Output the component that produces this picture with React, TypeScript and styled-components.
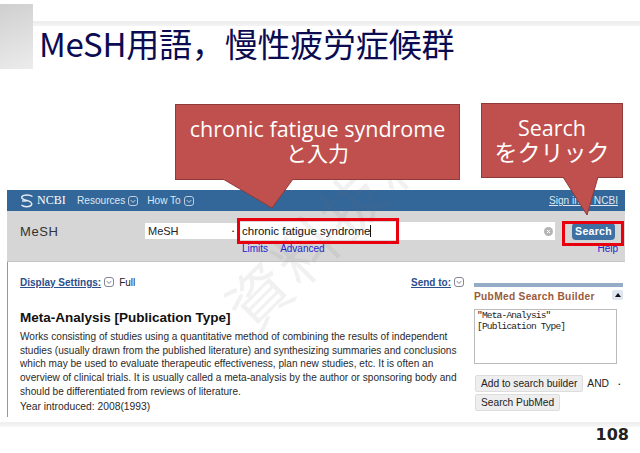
import React from 'react';
import styled, { createGlobalStyle } from 'styled-components';

const GlobalStyle = createGlobalStyle`
  html, body {
    margin: 0;
    padding: 0;
    background: #fff;
  }
`;

const sans = `"Liberation Sans", Arial, sans-serif`;
const slideFont = `"Open Sans", "Noto Sans CJK JP", sans-serif`;

const Slide = styled.div`
  position: relative;
  width: 640px;
  height: 453px;
  overflow: hidden;
  background: #fff;
  display: flex;
  flex-direction: column;
`;

const Header = styled.header`
  display: flex;
  height: 65px;
  margin-top: 4px;
  background: linear-gradient(#ececec, #f4f4f4) no-repeat 0 17px / 100% 5px;
`;

const Corner = styled.div`
  width: 33px;
  background: linear-gradient(160deg, #cfcfcf, #ececec);
`;

const Title = styled.h1`
  margin: 17px 0 0 6px;
  font: 400 33px/44px "Noto Sans CJK JP", sans-serif;
  color: #0b0b52;
  white-space: nowrap;
  letter-spacing: -0.2px;
`;

const Browser = styled.section`
  width: 618px;
  height: 227px;
  margin: 121px 0 0 7px;
  font-family: ${sans};
  display: flex;
  flex-direction: column;
`;

const TopBar = styled.div`
  height: 21px;
  flex: none;
  background: #336699;
  color: #dfe8f2;
  display: flex;
  align-items: center;
  padding: 0 7px 0 13px;
  font-size: 10.100px;
`;

const Brand = styled.span`
  display: flex;
  align-items: center;
  gap: 3px;
  width: 57px;
  font: 400 12px "Liberation Serif", serif;
  color: #fff;
`;

const NavItem = styled.span`
  display: flex;
  align-items: center;
  gap: 3px;
  margin-right: 9px;
`;

const SignIn = styled.a`
  margin-left: auto;
  text-decoration: underline;
  color: #dfe8f2;
`;

const SearchBar = styled.div`
  height: 51px;
  flex: none;
  background: #d6d6d6;
  border-bottom: 1px solid #c6c6c6;
  box-sizing: border-box;
  padding-top: 10px;
`;

const SearchRow = styled.div`
  display: flex;
  align-items: center;
  height: 20px;
`;

const DbName = styled.div`
  width: 125px;
  padding-left: 13px;
  box-sizing: border-box;
  font-size: 13px;
  letter-spacing: 0.6px;
  color: #333;
`;

const DbSelect = styled.div`
  width: 92px;
  height: 16px;
  margin-left: 13px;
  padding: 0 3px;
  box-sizing: border-box;
  background: #fff;
  font-size: 11px;
  line-height: 16px;
  color: #222;
  display: flex;
  justify-content: space-between;
`;

const Dot = styled.span`
  font-size: 6px;
`;

const TermInput = styled.div`
  width: 318px;
  height: 18px;
  padding-left: 5px;
  box-sizing: border-box;
  background: #fff;
  font-size: 11.500px;
  line-height: 18px;
  color: #111;
  display: flex;
  align-items: center;
`;

const Caret = styled.span`
  width: 1px;
  height: 12px;
  background: #111;
`;

const ClearIcon = styled.svg`
  width: 9px;
  height: 9px;
  margin-left: auto;
  margin-right: 2px;
`;

const SearchButton = styled.button`
  width: 43px;
  height: 17px;
  margin-left: 17px;
  padding: 0;
  border: 0;
  border-radius: 4px;
  background: #3f70a3;
  color: #fff;
  font: 700 10.500px ${sans};
  letter-spacing: 0.3px;
`;

const LinkRow = styled.div`
  display: flex;
  gap: 12px;
  margin-top: 1px;
  padding: 0 7px 0 235px;
  font-size: 10px;
  line-height: 13px;
  color: #2222cc;
`;

const HelpLink = styled.span`
  margin-left: auto;
`;

const Content = styled.div`
  flex: 1;
  display: flex;
  border-left: 1px solid #8b99b3;
  padding: 14px 0 0 12px;
  color: #222;
`;

const Article = styled.article`
  width: 444px;
  font-size: 10px;
`;

const MetaRow = styled.div`
  display: flex;
  align-items: center;
  gap: 3px;
  height: 12px;
  font-size: 10px;
`;

const MetaLink = styled.span`
  color: #2a4f8c;
  font-weight: 700;
  text-decoration: underline;
`;

const FullLabel = styled.span`
  margin-left: 2px;
`;

const SendTo = styled.span`
  margin-left: auto;
  display: flex;
  align-items: center;
  gap: 3px;
`;

const ArticleTitle = styled.h2`
  margin: 22px 0 5px;
  font: 700 13.500px/15px ${sans};
  color: #111;
`;

const Body = styled.p`
  margin: 0;
  font-size: 10.100px;
  line-height: 13.700px;
  color: #2a2a2a;
`;

const Year = styled.p`
  margin: 1px 0 0;
  font-size: 10.300px;
  line-height: 13px;
  color: #2a2a2a;
`;

const Sidebar = styled.aside`
  width: 149px;
  margin: 7px 0 0 10px;
`;

const SideHead = styled.div`
  border-top: 4px solid #95acc6;
  display: flex;
  justify-content: space-between;
  align-items: flex-start;
  height: 18px;
  margin-bottom: 4px;
`;

const SideTitle = styled.span`
  margin-top: 4px;
  font: 700 10.200px/12px ${sans};
  letter-spacing: 0.3px;
  color: #9a5a3a;
`;

const Collapse = styled.span`
  width: 11px;
  height: 10px;
  margin-top: 3px;
  border-radius: 2px;
  background: #dfe6ef;
  display: flex;
  align-items: center;
  justify-content: center;
`;

const UpArrow = styled.i`
  border: 3px solid transparent;
  border-top: 0;
  border-bottom: 4px solid #111;
`;

const QueryBox = styled.div`
  width: 143px;
  height: 55px;
  box-sizing: border-box;
  border: 1px solid #bbb;
  padding: 1px 2px;
  font: 400 9.500px/10.500px "Liberation Mono", monospace;
  letter-spacing: -0.8px;
  color: #222;
`;

const ButtonRow = styled.div<{ $gap: number }>`
  display: flex;
  align-items: center;
  gap: 4px;
  margin: ${(p) => p.$gap}px 0 0 1px;
`;

const PlainButton = styled.button`
  height: 17px;
  padding: 0 5px;
  border: 1px solid #ddd;
  border-radius: 2px;
  background: #eee;
  color: #222;
  font: 400 10.200px ${sans};
  white-space: nowrap;
`;

const AndSelect = styled.span`
  width: 35px;
  height: 14px;
  padding: 0 2px 0 0;
  box-sizing: border-box;
  background: #fff;
  font-size: 10.300px;
  line-height: 14px;
  display: flex;
  justify-content: space-between;
  color: #222;
`;

const Footer = styled.footer`
  flex: 1;
  margin-top: 5px;
  background: linear-gradient(#eeeeee, #f6f6f6) no-repeat 0 0 / 100% 5px;
  display: flex;
  justify-content: flex-end;
  padding: 3px 11px 0 0;
  font: 700 16px/20px "DejaVu Sans", sans-serif;
  color: #222;
`;

const Callout = styled.div<{ $left: number; $top: number; $w: number; $h: number }>`
  position: absolute;
  left: ${(p) => p.$left}px;
  top: ${(p) => p.$top}px;
  width: ${(p) => p.$w}px;
  height: ${(p) => p.$h}px;
  box-sizing: border-box;
  background: #c0504d;
  border: 1px solid #8f3b39;
  color: #fff;
  font: 400 21.500px/24px ${slideFont};
  text-align: center;
  padding-top: 12px;
`;

const Kana = styled.span<{ $size: number }>`
  display: block;
  font-size: ${(p) => p.$size}px;
`;

const Tail = styled.svg<{ $left: number; $top: number }>`
  position: absolute;
  left: ${(p) => p.$left}px;
  top: ${(p) => p.$top}px;
  overflow: visible;
`;

const Highlight = styled.div<{ $left: number; $top: number; $w: number; $h: number }>`
  position: absolute;
  left: ${(p) => p.$left}px;
  top: ${(p) => p.$top}px;
  width: ${(p) => p.$w}px;
  height: ${(p) => p.$h}px;
  box-sizing: border-box;
  border: 3px solid #e8000f;
`;

const Watermark = styled.div`
  position: absolute;
  left: 196px;
  top: 188px;
  font: 400 62px/70px "Noto Sans CJK JP", sans-serif;
  letter-spacing: 4px;
  color: rgba(120, 120, 120, 0.1);
  transform: rotate(-45deg);
  white-space: nowrap;
  pointer-events: none;
`;

const Chevron = ({ light }: { light?: boolean }) => (
  <svg width="10" height="10" viewBox="0 0 10 10" fill="none" stroke={light ? '#dfe8f2' : '#667'} strokeWidth="0.8">
    <rect x="0.5" y="0.5" width="9" height="9" rx="2.500" />
    <path d="M2.700 4 5 6.500 7.300 4" />
  </svg>
);

const Helix = () => (
  <svg width="14" height="14" viewBox="0 0 14 14" fill="none" stroke="#e8eef5" strokeWidth="1.400">
    <path d="M12.500 2.500C10 0.500 3.500 0.500 2 2.500S4.500 6 7 6.500 13 9 11.500 11 4 13.500 1.500 11" />
    <path d="M2 7H6.500" />
  </svg>
);

export default function App() {
  return (
    <Slide>
      <GlobalStyle />
      <Header>
        <Corner />
        <Title>MeSH用語，慢性疲労症候群</Title>
      </Header>

      <Browser>
        <TopBar>
          <Brand>
            <Helix />
            NCBI
          </Brand>
          <NavItem>
            Resources <Chevron light />
          </NavItem>
          <NavItem>
            How To <Chevron light />
          </NavItem>
          <SignIn>Sign in to NCBI</SignIn>
        </TopBar>

        <SearchBar>
          <SearchRow>
            <DbName>MeSH</DbName>
            <DbSelect>
              MeSH <Dot>•</Dot>
            </DbSelect>
            <TermInput>
              chronic fatigue syndrome
              <Caret />
              <ClearIcon viewBox="0 0 9 9">
                <circle cx="4.500" cy="4.500" r="4.500" fill="#b5b5b5" />
                <path d="M3 3 6 6M6 3 3 6" stroke="#fff" strokeWidth="1" />
              </ClearIcon>
            </TermInput>
            <SearchButton>Search</SearchButton>
          </SearchRow>
          <LinkRow>
            <span>Limits</span>
            <span>Advanced</span>
            <HelpLink>Help</HelpLink>
          </LinkRow>
        </SearchBar>

        <Content>
          <Article>
            <MetaRow>
              <MetaLink>Display Settings:</MetaLink>
              <Chevron />
              <FullLabel>Full</FullLabel>
              <SendTo>
                <MetaLink>Send to:</MetaLink>
                <Chevron />
              </SendTo>
            </MetaRow>
            <ArticleTitle>Meta-Analysis [Publication Type]</ArticleTitle>
            <Body>
              Works consisting of studies using a quantitative method of combining the results of independent studies
              (usually drawn from the published literature) and synthesizing summaries and conclusions which may be
              used to evaluate therapeutic effectiveness, plan new studies, etc. It is often an overview of clinical
              trials. It is usually called a meta-analysis by the author or sponsoring body and should be
              differentiated from reviews of literature.
            </Body>
            <Year>Year introduced: 2008(1993)</Year>
          </Article>

          <Sidebar>
            <SideHead>
              <SideTitle>PubMed Search Builder</SideTitle>
              <Collapse>
                <UpArrow />
              </Collapse>
            </SideHead>
            <QueryBox>
              "Meta-Analysis"
              <br />
              [Publication Type]
            </QueryBox>
            <ButtonRow $gap={11}>
              <PlainButton>Add to search builder</PlainButton>
              <AndSelect>
                AND <Dot>•</Dot>
              </AndSelect>
            </ButtonRow>
            <ButtonRow $gap={2}>
              <PlainButton>Search PubMed</PlainButton>
            </ButtonRow>
          </Sidebar>
        </Content>
      </Browser>

      <Footer>108</Footer>

      <Watermark>資料抜粋</Watermark>

      <Callout $left={175} $top={104} $w={285} $h={76}>
        chronic fatigue syndrome
        <Kana $size={21}>と入力</Kana>
      </Callout>
      <Tail $left={223} $top={179} width="71" height="30">
        <path d="M0 0 49 29 70 0" fill="#c0504d" stroke="#8f3b39" />
        <path d="M1 0H69" stroke="#c0504d" strokeWidth="2" />
      </Tail>
      <Callout $left={481} $top={103} $w={142} $h={75}>
        Search
        <Kana $size={23}>をクリック</Kana>
      </Callout>
      <Tail $left={563} $top={177} width="36" height="38">
        <path d="M0 0 24 38 35 0" fill="#c0504d" stroke="#8f3b39" />
        <path d="M1 0H34" stroke="#c0504d" strokeWidth="2" />
      </Tail>

      <Highlight $left={237} $top={218} $w={162} $h={26} />
      <Highlight $left={562} $top={221} $w={62} $h={25} />
    </Slide>
  );
}
